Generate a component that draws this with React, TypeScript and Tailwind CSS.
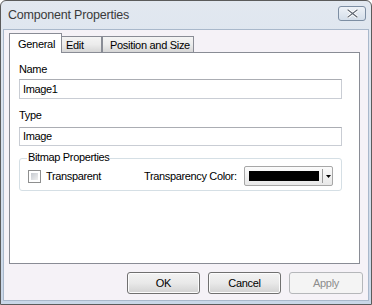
import React from "react";

const font = { fontFamily: '"Liberation Sans", Arial, sans-serif' };

function Btn({ label, disabled, w }: { label: string; disabled?: boolean; w: string }) {
  return (
    <div
      className={`${w} h-[22px] rounded-[3px] border flex items-center justify-center text-[11px] leading-[13px] tracking-[-0.3px] ${
        disabled
          ? "border-[#b5b7ba] bg-[#f4f4f4] text-[#8d8d8d]"
          : "border-[#707070] bg-gradient-to-b from-[#f3f3f3] via-[#e9e9e9] to-[#d2d2d2] text-black shadow-[inset_0_0_0_1px_#fcfcfc]"
      }`}
    >
      {label}
    </div>
  );
}

export default function App() {
  return (
    <div style={font} className="w-[372px] h-[305px] bg-white">
      <div className="w-[372px] h-[305px] flex flex-col border border-[#5b5b5b] rounded-t-[6px] bg-gradient-to-b from-[#e2e8f0] to-[#c9d7e8]">
        {/* Title bar */}
        <div className="h-[28px] flex items-center justify-between pl-[7px] pr-[5px] shrink-0">
          <span className="text-[12.5px] leading-[15px] tracking-[-0.2px] text-[#3a3a3a] mt-[1px] whitespace-nowrap">Component Properties</span>
          <div className="w-[28px] h-[15px] mb-[4px] rounded-[3px] border border-[#7d8ea3] bg-gradient-to-b from-[#eef2f7] to-[#d4deea] flex items-center justify-center">
            <svg width="11" height="9" viewBox="0 0 11 9">
              <path d="M1 1 L10 8 M10 1 L1 8" stroke="#ffffff" strokeWidth="3" strokeLinecap="square" />
              <path d="M1 1 L10 8 M10 1 L1 8" stroke="#5c6470" strokeWidth="1.2" strokeLinecap="square" />
            </svg>
          </div>
        </div>
        {/* Client */}
        <div className="flex-1 mx-[2px] mb-[3px] bg-[#f5f2f7] border border-[#a9b8cb] flex flex-col">
          {/* Tab strip */}
          <div className="relative z-10 -mb-px ml-[5px] mt-[3px] h-[20px] flex items-end text-[11px] leading-[13px] tracking-[-0.3px] text-black whitespace-nowrap">
            <div className="w-[53px] h-[20px] border border-b-0 border-[#898c95] bg-white flex items-start pl-[8px] pt-[4px]">
              General
            </div>
            <div className="w-[40px] h-[17px] border border-l-0 border-[#898c95] bg-gradient-to-b from-[#f4f4f4] via-[#ececec] to-[#d6d6d6] pl-[4px] pt-[2px]">
              Edit
            </div>
            <div className="w-[92px] h-[17px] border border-[#898c95] bg-gradient-to-b from-[#f4f4f4] via-[#ececec] to-[#d6d6d6] pl-[7px] pt-[2px]">
              Position and Size
            </div>
          </div>
          {/* Panel */}
          <div className="ml-[5px] w-[351px] h-[212px] border border-[#898c95] bg-white pl-[9px] pt-[10px] text-[11px] leading-[13px] tracking-[-0.35px] text-black whitespace-nowrap">
            <div>Name</div>
            <div className="mt-[3px] w-[323px] h-[20px] border border-[#c9cdd4] border-t-[#abadb3] flex items-center pl-[3px]">
              Image1
            </div>
            <div className="mt-[10px]">Type</div>
            <div className="mt-[5px] w-[323px] h-[19px] border border-[#c9cdd4] border-t-[#abadb3] flex items-center pl-[3px]">
              Image
            </div>
            {/* Group */}
            <div className="relative mt-[12px] w-[323px] h-[33px] border border-[#d5dfe5] rounded-[3px]">
              <div className="absolute left-[7px] -top-[8px] bg-white px-[1px]">Bitmap Properties</div>
              <div className="flex items-center pl-[8px] pt-[7px]">
                <div className="w-[116px] flex items-center">
                  <div className="w-[13px] h-[13px] border border-[#8e8f8f] bg-white p-[2px]">
                    <div className="w-full h-full bg-gradient-to-br from-[#c6cad0] to-[#f0f0f0]"></div>
                  </div>
                  <span className="ml-[5px]">Transparent</span>
                </div>
                <div className="w-[100px]">Transparency Color:</div>
                <div className="w-[89px] h-[20px] rounded-[2px] border border-[#a7a7a7] bg-gradient-to-b from-[#fbfbfb] to-[#e8e8e8] flex items-center pl-[4px]">
                  <div className="w-[70px] h-[10px] bg-black"></div>
                  <div className="ml-[3px] w-px h-[14px] bg-[#9a9a9a]"></div>
                  <svg className="ml-[3px]" width="5" height="3" viewBox="0 0 5 3">
                    <path d="M0 0 H5 L2.5 3 Z" fill="#000" />
                  </svg>
                </div>
              </div>
            </div>
          </div>
          {/* Buttons */}
          <div className="mt-[8px] flex justify-end pr-[5px] gap-[8px]">
            <Btn label="OK" w="w-[73px]" />
            <Btn label="Cancel" w="w-[73px]" />
            <Btn label="Apply" w="w-[74px]" disabled />
          </div>
        </div>
      </div>
    </div>
  );
}
